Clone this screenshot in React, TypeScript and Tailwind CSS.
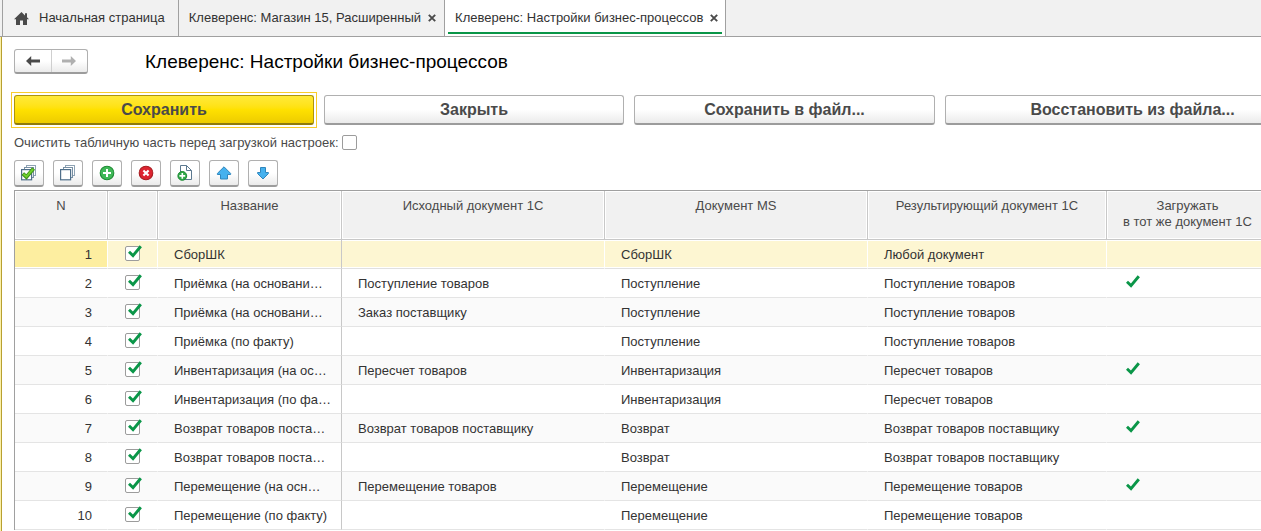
import type { ReactNode } from "react";

type Row = {
  name: string;
  source: string;
  ms: string;
  result: string;
  sameDoc?: boolean;
};

const rows: Row[] = [
  { name: "СборШК", source: "", ms: "СборШК", result: "Любой документ" },
  { name: "Приёмка (на основани…", source: "Поступление товаров", ms: "Поступление", result: "Поступление товаров", sameDoc: true },
  { name: "Приёмка (на основани…", source: "Заказ поставщику", ms: "Поступление", result: "Поступление товаров" },
  { name: "Приёмка (по факту)", source: "", ms: "Поступление", result: "Поступление товаров" },
  { name: "Инвентаризация (на ос…", source: "Пересчет товаров", ms: "Инвентаризация", result: "Пересчет товаров", sameDoc: true },
  { name: "Инвентаризация (по фа…", source: "", ms: "Инвентаризация", result: "Пересчет товаров" },
  { name: "Возврат товаров поста…", source: "Возврат товаров поставщику", ms: "Возврат", result: "Возврат товаров поставщику", sameDoc: true },
  { name: "Возврат товаров поста…", source: "", ms: "Возврат", result: "Возврат товаров поставщику" },
  { name: "Перемещение (на осн…", source: "Перемещение товаров", ms: "Перемещение", result: "Перемещение товаров", sameDoc: true },
  { name: "Перемещение (по факту)", source: "", ms: "Перемещение", result: "Перемещение товаров" },
];

function Check({ className = "" }: { className?: string }) {
  return (
    <svg width="14" height="13" viewBox="0 0 14 13" className={className} aria-hidden="true">
      <path d="M1 6.8 L5 10.6 L12.8 1.2" fill="none" stroke="#0a9648" strokeWidth="2.9" />
    </svg>
  );
}

function CloseIcon() {
  return (
    <svg width="8" height="8" viewBox="0 0 8 8" aria-hidden="true">
      <path d="M0.8 0.8 L7.2 7.2 M7.2 0.8 L0.8 7.2" stroke="#4a4a4a" strokeWidth="1.9" />
    </svg>
  );
}

function Arrow({ flip = false }: { flip?: boolean }) {
  return (
    <svg width="14" height="10" viewBox="0 0 14 10" className={flip ? "-scale-x-100" : ""} aria-hidden="true">
      <path d="M0 5 L5.2 0 V3.5 H14 V6.5 H5.2 V10 Z" fill="currentColor" />
    </svg>
  );
}

function Stack({ checked = false }: { checked?: boolean }) {
  return (
    <svg width="16" height="16" viewBox="0 0 16 16" aria-hidden="true">
      <rect x="5.5" y="0.5" width="9" height="10" fill="#fff" stroke="#8fa3b4" />
      <rect x="3.5" y="2.5" width="9" height="10" fill="#fff" stroke="#7890a4" />
      <rect x="0.6" y="4.6" width="10" height="10.2" fill="#fff" stroke="#4f6f8a" strokeWidth="1.2" />
      {checked && (
        <path d="M1.8 8.6 L5.4 12 L12.6 3.6" fill="none" stroke="#3d8f1c" strokeWidth="3.8" />
      )}
      {checked && (
        <path d="M2.4 9 L5.4 11.7 L12.1 4" fill="none" stroke="#6fd02c" strokeWidth="2" />
      )}
    </svg>
  );
}

function Round({ remove = false }: { remove?: boolean }) {
  return (
    <svg width="16" height="16" viewBox="0 0 16 16" aria-hidden="true">
      <circle cx="8" cy="8" r="6.8" fill={remove ? "#dc2430" : "#40b858"} stroke={remove ? "#a81c20" : "#1e8c34"} strokeWidth="1.1" />
      {remove ? (
        <path d="M5.4 5.4 L10.6 10.6 M10.6 5.4 L5.4 10.6" stroke="#fff" strokeWidth="2.1" />
      ) : (
        <path d="M8 4 V12 M4 8 H12" stroke="#fff" strokeWidth="2" />
      )}
    </svg>
  );
}

function DocAdd() {
  return (
    <svg width="16" height="16" viewBox="0 0 16 16" aria-hidden="true">
      <path d="M3.5 0.5 H9.5 L14.5 5.5 V14.5 H3.5 Z" fill="#fff" stroke="#5b788f" />
      <path d="M9.5 0.5 V5.5 H14.5" fill="none" stroke="#5b788f" />
      <circle cx="5.3" cy="10.9" r="4.4" fill="#2fa84a" stroke="#1b8a30" />
      <path d="M5.3 8 V13.8 M2.4 10.9 H8.2" stroke="#fff" strokeWidth="1.6" />
    </svg>
  );
}

function UpArrow() {
  return (
    <svg width="16" height="16" viewBox="0 0 16 16" aria-hidden="true">
      <path d="M8 1.8 L14.6 8.4 V9.5 H11.5 V14 H4.5 V9.5 H1.4 V8.4 Z" fill="#45b1ee" stroke="#2f86bd" strokeWidth="1" />
    </svg>
  );
}

function DownArrow() {
  return (
    <svg width="16" height="16" viewBox="0 0 16 16" aria-hidden="true">
      <path d="M8 14 L13.4 8.6 V7.5 H10.5 V2.5 H5.5 V7.5 H2.6 V8.6 Z" fill="#45b1ee" stroke="#2f86bd" strokeWidth="1" />
    </svg>
  );
}

function ToolButton({ label, children }: { label: string; children: ReactNode }) {
  return (
    <button
      type="button"
      aria-label={label}
      className="flex h-[27px] w-[30px] items-center justify-center rounded-[3px] border border-b-2 border-[#b0b0b0] border-b-[#9c9c9c] bg-linear-to-b from-white from-50% to-[#ebebeb]"
    >
      {children}
    </button>
  );
}

const bigButton =
  "h-[30px] shrink-0 rounded-[3px] border border-b-2 text-[16px] leading-6 font-bold text-[#4a4a4a]";
const plainButton =
  "border-[#b0b0b0] border-b-[#9c9c9c] bg-linear-to-b from-white from-50% to-[#ebebeb]";

const headers: ReactNode[] = [
  "N",
  "",
  "Название",
  "Исходный документ 1С",
  "Документ MS",
  "Результирующий документ 1С",
  <>
    Загружать
    <br />в тот же документ 1С
  </>,
];

function TableRow({ row, index }: { row: Row; index: number }) {
  const selected = index === 0;
  const cell = selected
    ? "h-[29px] border-b border-b-[#e0e0e0] border-r shadow-[inset_0_1px_#fff,inset_0_-1px_#fff]"
    : "h-[29px] border-b border-b-[#e4e4e4] border-r";
  const divider = selected ? "border-r-white" : "border-r-transparent";
  const fill = selected ? "bg-[#fdf6d2]" : "";
  const text = `${cell} ${fill} pt-0.5 px-4 whitespace-nowrap`;
  return (
    <tr className={index % 2 === 0 ? "bg-[#fafafa]" : "bg-white"}>
      <td className={`${cell} ${divider} pt-0.5 pr-[15px] text-right ${selected ? "bg-[#fdeea0]" : ""}`}>{index + 1}</td>
      <td className={`${cell} ${divider} ${fill} pb-0.5`}>
        <span className="relative mx-auto block size-[15px]">
          <input
            type="checkbox"
            defaultChecked
            aria-label={`Использовать строку ${index + 1}`}
            className="block size-[15px] appearance-none rounded-[2px] border border-[#9c9c9c] bg-white"
          />
          <Check className="pointer-events-none absolute -top-px left-[3px]" />
        </span>
      </td>
      <td className={`${text} border-r-[#c8c8c8]`}>{row.name}</td>
      <td className={`${text} ${divider}`}>{row.source}</td>
      <td className={`${text} ${divider}`}>{row.ms}</td>
      <td className={`${text} ${divider}`}>{row.result}</td>
      <td className={`${cell} ${divider} ${fill} pb-1 pl-[19px]`}>{row.sameDoc && <Check />}</td>
    </tr>
  );
}

export default function App() {
  return (
    <div className="flex min-h-screen flex-col overflow-hidden bg-white font-['Liberation_Sans',Arial,sans-serif] text-[13px] leading-4 text-[#333]">
      <nav className="flex h-[37px] border-b border-[#a0a0a0] bg-[#f1f1f1] pl-0.5" aria-label="Вкладки">
        <a href="#home" className="flex items-center border-l border-[#a0a0a0] pr-[13px] pl-[11px]">
          <svg width="15" height="13" viewBox="0 0 15 13" className="mr-[10px]" aria-hidden="true">
            <path d="M7.5 0 L11 3.4 V1.2 H13 V5.3 L15 7.2 H13 V13 H9 V8.5 H6 V13 H2 V7.2 H0 Z" fill="#4a4a4a" />
          </svg>
          Начальная страница
        </a>
        <div className="flex items-center gap-[7px] border-l border-[#a0a0a0] pr-2 pl-[10px]">
          <a href="#shop">Клеверенс: Магазин 15, Расширенный</a>
          <button type="button" aria-label="Закрыть вкладку"><CloseIcon /></button>
        </div>
        <div className="relative flex items-center gap-[7px] border-x border-[#a0a0a0] bg-white pr-[7px] pl-[10px]">
          <a href="#settings" aria-current="page">Клеверенс: Настройки бизнес-процессов</a>
          <button type="button" aria-label="Закрыть вкладку"><CloseIcon /></button>
          <span className="absolute inset-x-[3px] bottom-0.5 h-0.5 bg-[#0a9648]" />
        </div>
      </nav>

      <div className="flex flex-1 bg-[#fbf0a8] pl-px">
        <main className="min-w-0 flex-1 border-l border-[#b8a030] bg-white pt-3 pl-3">
          <div className="flex items-center">
            <div className="flex h-[25px] w-[74px] rounded-[3px] border border-b-2 border-[#b0b0b0] border-b-[#9c9c9c] bg-linear-to-b from-white from-50% to-[#ebebeb]">
              <button type="button" aria-label="Назад" className="flex flex-1 items-center justify-center border-r border-[#cfcfcf] text-[#4a4a4a]">
                <Arrow />
              </button>
              <button type="button" aria-label="Вперёд" disabled className="flex flex-1 items-center justify-center text-[#b0b0b0]">
                <Arrow flip />
              </button>
            </div>
            <h1 className="ml-[57px] pt-px text-[19px] leading-6 whitespace-nowrap text-black">Клеверенс: Настройки бизнес-процессов</h1>
          </div>

          <div className="mt-[21px] flex gap-[10px]">
            <div className="flex shrink-0 outline outline-offset-2 outline-[#f8cc2c]">
              <button type="button" className={`${bigButton} w-[300px] border-[#ab9310] border-b-[#8f7a0c] bg-linear-to-b from-[#ffe936] via-[#ffe100] to-[#edcc00]`}>
                Сохранить
              </button>
            </div>
            <button type="button" className={`${bigButton} ${plainButton} w-[300px]`}>Закрыть</button>
            <button type="button" className={`${bigButton} ${plainButton} w-[301px]`}>Сохранить в файл...</button>
            <button type="button" className={`${bigButton} ${plainButton} w-[375px]`}>Восстановить из файла...</button>
          </div>

          <div className="mt-[10px] flex h-[15px] items-center gap-[3px]">
            <label htmlFor="clear-table" className="text-[#4a4a4a]">Очистить табличную часть перед загрузкой настроек:</label>
            <input id="clear-table" type="checkbox" className="size-[15px] appearance-none rounded-[2px] border border-[#9c9c9c] bg-white" />
          </div>

          <div className="mt-[10px] flex gap-[9px]">
            <ToolButton label="Установить флажки"><Stack checked /></ToolButton>
            <ToolButton label="Снять флажки"><Stack /></ToolButton>
            <ToolButton label="Добавить"><Round /></ToolButton>
            <ToolButton label="Удалить"><Round remove /></ToolButton>
            <ToolButton label="Добавить копированием"><DocAdd /></ToolButton>
            <ToolButton label="Переместить вверх"><UpArrow /></ToolButton>
            <ToolButton label="Переместить вниз"><DownArrow /></ToolButton>
          </div>

          <table className="mt-[3px] w-[1255px] min-w-full table-fixed border-separate border-spacing-0 border-t border-l border-[#a0a0a0]">
            <colgroup>
              <col className="w-[93px]" />
              <col className="w-[50px]" />
              <col className="w-[184px]" />
              <col className="w-[263px]" />
              <col className="w-[263px]" />
              <col className="w-[239px]" />
              <col className="w-[162px]" />
            </colgroup>
            <thead>
              <tr>
                {headers.map((header, i) => (
                  <th key={i} scope="col" className="h-[49px] border-r border-b border-[#c8c8c8] bg-[#f1f1f1] pt-[7px] align-top font-normal whitespace-nowrap text-[#4a4a4a] shadow-[inset_0_0_0_1px_#fff]">
                    {header}
                  </th>
                ))}
              </tr>
            </thead>
            <tbody>
              {rows.map((row, i) => (
                <TableRow key={i} row={row} index={i} />
              ))}
            </tbody>
          </table>
        </main>
      </div>
    </div>
  );
}
